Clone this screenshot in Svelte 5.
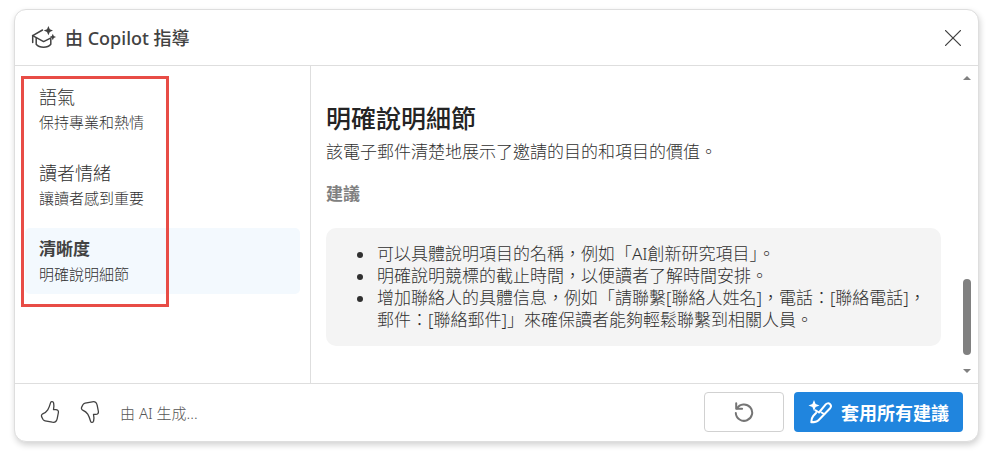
<script lang="ts">
  interface Topic {
    id: string;
    title: string;
    summary: string;
  }

  const topics: Topic[] = [
    { id: "tone", title: "語氣", summary: "保持專業和熱情" },
    { id: "sentiment", title: "讀者情緒", summary: "讓讀者感到重要" },
    { id: "clarity", title: "清晰度", summary: "明確說明細節" },
  ];

  const suggestions = [
    "可以具體說明項目的名稱，例如「AI創新研究項目」。",
    "明確說明競標的截止時間，以便讀者了解時間安排。",
    "增加聯絡人的具體信息，例如「請聯繫[聯絡人姓名]，電話：[聯絡電話]，郵件：[聯絡郵件]」來確保讀者能夠輕鬆聯繫到相關人員。",
  ];

  let activeId = $state("clarity");
</script>

<section class="coach" aria-labelledby="coach-title">
  <header class="header">
    <svg class="cap" viewBox="0 0 26 24" aria-hidden="true">
      <path d="M11.500 4 1.700 9.600l10.900 6 7-3.400" />
      <path d="M1.700 9.600v7" />
      <path d="M5.200 12v6.200c1.800 2.200 4.500 3 7.400 3s5.400-.8 7.200-3v-5.500" />
      <path class="fill" d="M17.400 0 18.800 3.200 22 4.600l-3.200 1.400-1.400 3.200L16 6l-3.200-1.400L16 3.200z" />
      <path class="fill" d="m21.800 7.800 1 2.200 2.200 1-2.200 1-1 2.200-1-2.200-2.200-1 2.200-1z" />
    </svg>
    <h1 id="coach-title">由 Copilot 指導</h1>
    <button type="button" class="icon-btn close" aria-label="關閉">
      <svg viewBox="0 0 16 16" aria-hidden="true"><path d="M.6.6 15.400 15.400M15.400.6.6 15.400" /></svg>
    </button>
  </header>

  <div class="body">
    <nav class="sidebar">
      <div class="topics">
        {#each topics as t (t.id)}
          <button
            type="button"
            class="topic"
            class:active={t.id === activeId}
            onclick={() => (activeId = t.id)}
          >
            <span class="name">{t.title}</span>
            <span class="summary">{t.summary}</span>
          </button>
        {/each}
      </div>
    </nav>

    <main class="content">
      <h2>明確說明細節</h2>
      <p>該電子郵件清楚地展示了邀請的目的和項目的價值。</p>
      <h3>建議</h3>
      <ul class="suggestions">
        {#each suggestions as s}
          <li><span>{s}</span></li>
        {/each}
      </ul>
    </main>

    <div class="scrollbar" aria-hidden="true">
      <span class="arrow up"></span>
      <span class="thumb"></span>
      <span class="arrow down"></span>
    </div>
  </div>

  <footer class="footer">
    <button type="button" class="icon-btn vote" aria-label="讚">
      <svg viewBox="0 0 20 24" aria-hidden="true">
        <path d="M10.700 2.400c.4-1.200 2.500-1.100 2.900.4.500 2.300.4 4.600-.1 6.800h2.300c1.800 0 2.900 1.200 2.600 2.900l-1.200 6.100c-.5 2.500-2.500 4-4.900 3.600l-7.200-1.400c-1-.2-1.700-.7-2.200-1.600l-1.200-2.300c-.6-1.300-.1-2.500 1-3 4.700-2 6.100-5 8-11.500z" />
      </svg>
    </button>
    <button type="button" class="icon-btn vote" aria-label="倒讚">
      <svg viewBox="0 0 20 24" aria-hidden="true">
        <path d="M10.700 21.600c.4 1.200 2.500 1.100 2.900-.4.500-2.300.4-4.600-.1-6.800h2.300c1.800 0 2.900-1.200 2.600-2.900l-1.200-6.100c-.5-2.500-2.500-4-4.900-3.600L5.100 3.200c-1 .2-1.700.7-2.200 1.600L1.700 7.100c-.6 1.300-.1 2.500 1 3 4.700 2 6.100 5 8 11.500z" />
      </svg>
    </button>
    <span class="note">由 AI 生成...</span>
    <button type="button" class="btn retry" aria-label="重新產生">
      <svg viewBox="0 0 20 20" aria-hidden="true">
        <path d="M2.200 1.200v5.600h5.900" />
        <path d="M2.900 6.500A8.200 8.200 0 1 1 1.800 11" />
      </svg>
    </button>
    <button type="button" class="btn apply">
      <svg viewBox="0 0 24 24" aria-hidden="true">
        <path class="star" d="M6 0 7.600 3.900 11.500 5.500 7.600 7.100 6 11 4.400 7.100.5 5.500l3.900-1.600z" />
        <path d="M7.500 10.300 11 12.500l6.500-7.800c1.200-1.400 3-1.900 4.400-.7 1.300 1.200 1.200 3.100 0 4.500L10.500 20.300c-1.500 1.500-4.500 2-7.200 2 0-2.500.4-4.500 1.900-6.300L8 13" />
        <path d="M13.500 12.500 16 14" />
      </svg>
      <span>套用所有建議</span>
    </button>
  </footer>
</section>

<style>
  :global(body) {
    margin: 0;
    background: #fff;
  }

  .coach {
    --line: #dedede;
    --text: #303030;
    margin: 9px 8px 11px 14px;
    border: 1px solid var(--line);
    border-radius: 12px;
    background: #fff;
    box-shadow: 1px 3px 6px rgb(0 0 0 / 18%);
    color: var(--text);
    font-family: "Noto Sans", "Noto Sans CJK TC", sans-serif;
    font-size: 17px;
    font-weight: 300;
  }

  h1,
  h2,
  h3,
  p {
    margin: 0;
  }

  button {
    font: inherit;
    color: inherit;
    cursor: pointer;
  }

  svg {
    fill: none;
    stroke: currentColor;
    stroke-linecap: round;
    stroke-linejoin: round;
  }

  .header {
    display: flex;
    align-items: center;
    padding: 16px 17px 15px 16px;
    border-bottom: 1px solid var(--line);
    color: #424242;
  }

  .cap {
    width: 26px;
    height: 24px;
    margin-right: 8px;
    stroke-width: 1.5;
  }

  .cap .fill {
    fill: currentColor;
    stroke: none;
  }

  h1 {
    flex: 1;
    font-size: 18px;
    font-weight: 500;
    line-height: 24px;
  }

  .icon-btn {
    display: flex;
    padding: 0;
    border: none;
    background: transparent;
  }

  .close svg {
    width: 16px;
    height: 16px;
    stroke-width: 1.3;
  }

  .body {
    display: flex;
  }

  .sidebar {
    flex: 0 0 275px;
    padding: 10px;
    border-right: 1px solid var(--line);
  }

  .topics {
    position: relative;
    display: flex;
    flex-direction: column;
    gap: 10px;
  }

  /* callout frame around the topic names */
  .topics::after {
    content: "";
    position: absolute;
    inset: 0 auto -13px -4px;
    width: 142px;
    border: 3px solid #e84c46;
    pointer-events: none;
  }

  .topic {
    display: flex;
    flex-direction: column;
    padding: 8px 14px;
    border: none;
    border-radius: 5px;
    background: transparent;
    text-align: left;
  }

  .topic.active {
    background: #f3f9fe;
  }

  .name {
    font-size: 18px;
    line-height: 26px;
  }

  .active .name {
    color: #424242;
    font-size: 17px;
    font-weight: 700;
  }

  .summary {
    font-size: 15px;
    line-height: 24px;
  }

  .content {
    flex: 1;
    min-width: 0;
    padding: 34px 0 37px 15px;
  }

  h2 {
    color: #242424;
    font-size: 25px;
    font-weight: 500;
    line-height: 36px;
  }

  p {
    margin-top: 4px;
    line-height: 24px;
  }

  h3 {
    margin-top: 18px;
    color: #808080;
    font-size: 17px;
    font-weight: 700;
    line-height: 24px;
  }

  .suggestions {
    margin: 22px 0 0;
    padding: 15px 0 15px 31px;
    border-radius: 10px;
    background: #f4f4f4;
    line-height: 22px;
    list-style: none;
  }

  .suggestions li {
    display: flex;
    gap: 14px;
  }

  .suggestions li::before {
    content: "";
    flex: none;
    width: 6px;
    height: 6px;
    margin-top: 9px;
    border-radius: 50%;
    background: var(--text);
  }

  .scrollbar {
    display: flex;
    flex-direction: column;
    align-items: center;
    width: 8px;
    padding: 10px 7px 10px 22px;
  }

  .arrow {
    border: 4px solid transparent;
  }

  .arrow.up {
    margin-bottom: auto;
    border-top: none;
    border-bottom-color: #808080;
  }

  .arrow.down {
    margin-top: 14px;
    border-bottom: none;
    border-top-color: #808080;
  }

  .thumb {
    width: 8px;
    height: 76px;
    border-radius: 4px;
    background: #808080;
  }

  .footer {
    display: flex;
    align-items: center;
    padding: 8px 15px 9px 25px;
    border-top: 1px solid var(--line);
  }

  .vote {
    margin-right: 20px;
    color: #424242;
  }

  .vote svg {
    width: 20px;
    height: 24px;
    stroke-width: 1.3;
  }

  .note {
    flex: 1;
    color: #555;
    font-size: 15px;
  }

  .btn {
    display: flex;
    align-items: center;
    justify-content: center;
    height: 40px;
    border-radius: 4px;
  }

  .retry {
    width: 80px;
    border: 1px solid #d1d1d1;
    background: #fff;
    color: #757575;
  }

  .retry svg {
    width: 20px;
    height: 20px;
    stroke-width: 2;
  }

  .apply {
    gap: 9px;
    margin-left: 10px;
    padding: 0 14px;
    border: none;
    background: #2085de;
    color: #fff;
    font-size: 18px;
    font-weight: 700;
  }

  .apply svg {
    width: 24px;
    height: 24px;
    stroke-width: 2;
  }

  .apply .star {
    fill: currentColor;
    stroke: none;
  }
</style>
